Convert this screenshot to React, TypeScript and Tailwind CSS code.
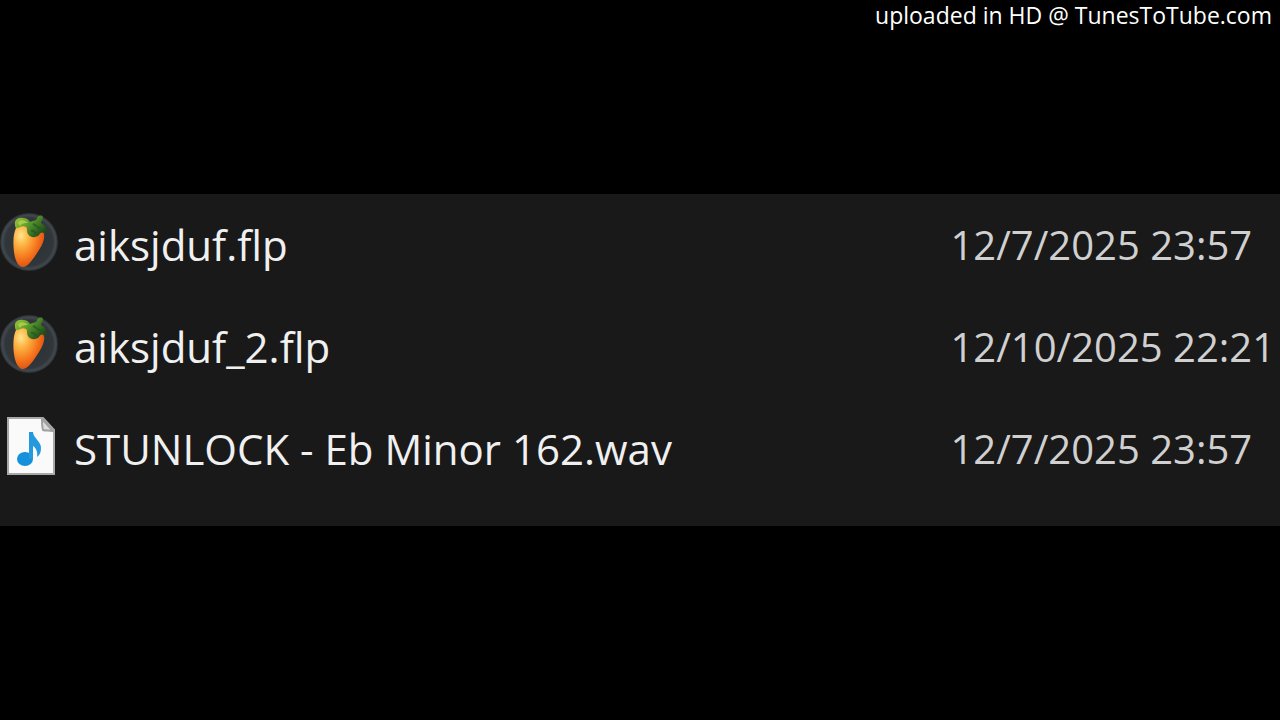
import React from "react";

interface FileEntry {
  name: string;
  modified: string;
  kind: "project" | "audio";
}

const files: FileEntry[] = [
  { name: "aiksjduf.flp", modified: "12/7/2025 23:57", kind: "project" },
  { name: "aiksjduf_2.flp", modified: "12/10/2025 22:21", kind: "project" },
  {
    name: "STUNLOCK - Eb Minor 162.wav",
    modified: "12/7/2025 23:57",
    kind: "audio",
  },
];

const ProjectIcon: React.FC = () => (
  <svg viewBox="0 0 60 64" className="h-16 w-15 shrink-0" aria-hidden="true">
    <defs>
      <radialGradient id="carrot" cx="0.25" cy="0.25" r="0.85">
        <stop offset="0" stopColor="#ffe68c" />
        <stop offset="0.3" stopColor="#fdb040" />
        <stop offset="0.65" stopColor="#f5741c" />
        <stop offset="1" stopColor="#d2480f" />
      </radialGradient>
      <radialGradient id="disc" cx="0.5" cy="0.5" r="0.5">
        <stop offset="0" stopColor="#2b3034" />
        <stop offset="0.82" stopColor="#30363a" />
        <stop offset="0.92" stopColor="#42494e" />
        <stop offset="1" stopColor="#2a2e31" />
      </radialGradient>
      <linearGradient id="leaf" x1="0" y1="0" x2="1" y2="0.6">
        <stop offset="0" stopColor="#a4c93a" />
        <stop offset="0.45" stopColor="#5f9f2e" />
        <stop offset="1" stopColor="#1f4a1c" />
      </linearGradient>
    </defs>
    <circle cx="29" cy="32" r="29" fill="url(#disc)" />
    {/* Carrot body */}
    <path
      d="M16 18C13 24 13 34 14 42C15 50 18 57 23 57C28 57 34 48 39 40C43 34 45 28 44 24C42 18 34 15 26 15C22 15 19 15 16 18Z"
      fill="url(#carrot)"
    />
    {/* Leaves */}
    <path
      d="M15 15C14 10 18 7 23 8C27 8 29 10 30 12C33 10 37 11 37 8C39 5 42 5 43 7C43 10 41 11 41 13C46 15 48 20 46 24C43 22 41 22 39 25C36 28 30 28 28 24C26 21 28 19 26 17C23 15 20 17 18 18C16 19 15 17 15 15Z"
      fill="url(#leaf)"
    />
    <path
      d="M18 13C20 9 25 10 28 13C25 13 22 13 20 16Z"
      fill="#bfd957"
      opacity="0.7"
    />
    <path
      d="M31 21C33 20 35 22 36 24M33 14C36 15 38 18 41 19"
      stroke="#1e5a1d"
      strokeWidth="2"
      opacity="0.7"
      fill="none"
    />
  </svg>
);

const AudioIcon: React.FC = () => (
  <svg viewBox="0 0 60 64" className="h-16 w-15 shrink-0" aria-hidden="true">
    <path
      d="M8 4H43L54 16V60H8Z"
      fill="#fafafa"
      stroke="#a8a8a8"
      strokeWidth="2"
    />
    <path
      d="M42 5C42 10 42 13 43 16C46 17 49 16 53 17Z"
      fill="#dcdcdc"
      stroke="#a0a0a0"
      strokeWidth="2"
      strokeLinejoin="round"
    />
    {/* Eighth note */}
    <ellipse cx="25" cy="45" rx="8" ry="7" fill="#1591dc" />
    <path
      d="M29 18H33C33 24 41 27 41 34C41 38 40 41 37 43C38 38 36 34 33 32V45H29Z"
      fill="#2499e0"
    />
  </svg>
);

const FileRow: React.FC<{ file: FileEntry }> = ({ file }) => (
  <tr className="h-[102px]">
    <td className="p-0 align-middle">
      <div className="flex items-center gap-[14px]">
        <span className="pb-[6px]">
          {file.kind === "project" ? <ProjectIcon /> : <AudioIcon />}
        </span>
        <span className="whitespace-nowrap text-[42px] text-[#f0f0f0]">
          {file.name}
        </span>
      </div>
    </td>
    <td className="whitespace-nowrap p-0 align-middle text-[40px] text-[#d0d0d0]">
      {file.modified}
    </td>
  </tr>
);

const App: React.FC = () => {
  return (
    <div className="grid min-h-screen grid-cols-1 grid-rows-[1fr_auto_1fr] bg-black font-['Open_Sans',sans-serif]">
      <header className="px-2 text-right text-[23px] leading-[30px] text-white">
        uploaded in HD @ TunesToTube.com
      </header>
      <main className="bg-[#191919] pb-[26px]">
        <table className="w-full table-fixed border-collapse text-left leading-[50px]">
          <colgroup>
            <col className="w-[74.25%]" />
            <col />
          </colgroup>
          <tbody>
            {files.map((file) => (
              <FileRow key={file.name} file={file} />
            ))}
          </tbody>
        </table>
      </main>
    </div>
  );
};

export default App;
